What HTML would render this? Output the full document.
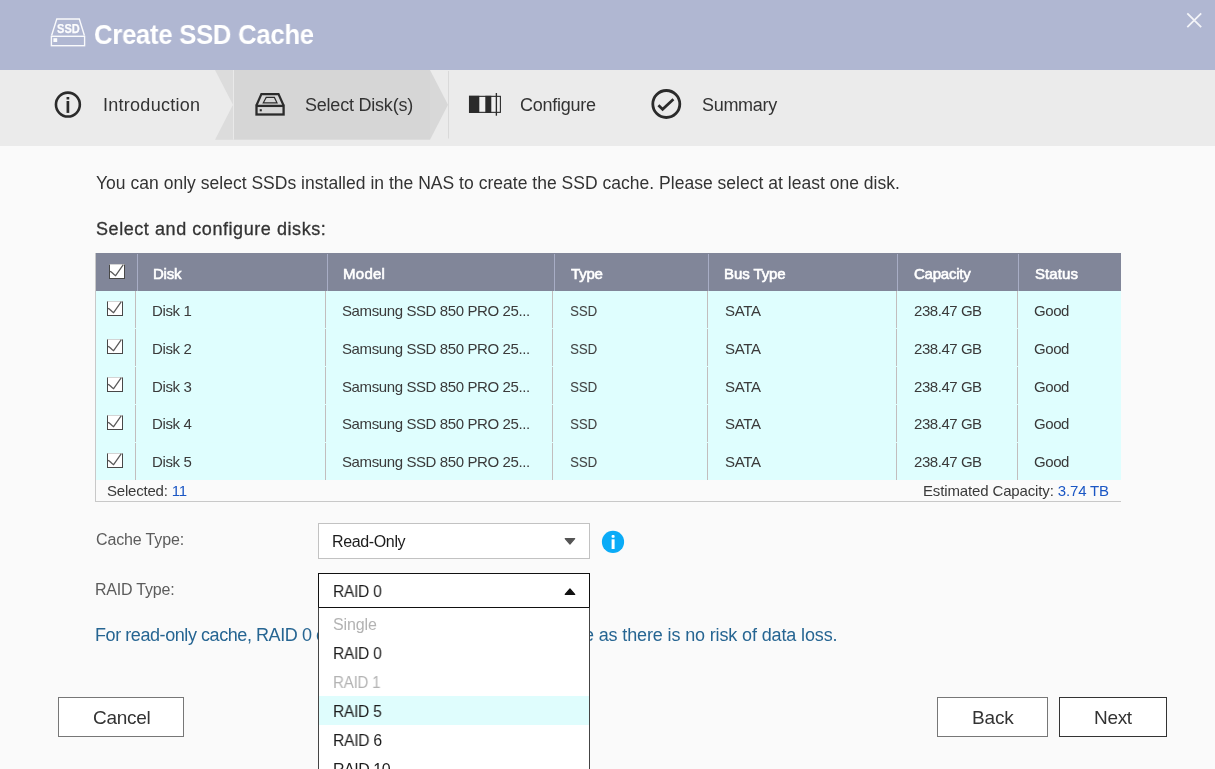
<!DOCTYPE html>
<html lang="en">
<head>
<meta charset="utf-8">
<title>Create SSD Cache</title>
<style>
*{box-sizing:border-box;margin:0;padding:0}
html,body{width:1215px;height:769px;overflow:hidden}
body{position:relative;background:#fafafa;font-family:"Liberation Sans",sans-serif;color:#333;}
.abs{position:absolute}
.t{position:absolute;white-space:nowrap;line-height:1;transform-origin:0 0;will-change:transform}
#hdr{left:0;top:0;width:1215px;height:70px;background:#b0b7d2}
#tabs{left:0;top:70px;width:1215px;height:76px;background:#ebebeb}
.tab{font-size:18px;color:#333;letter-spacing:-0.35px}
/* table */
#thead{left:96px;top:253px;width:1025px;height:38px;background:#818699}
#tbody{left:96px;top:291px;width:1025px;height:189px;background:#dffefe}
#tfoot{left:95px;top:480px;width:1026px;height:22px;border-left:1px solid #c8c8c8;border-bottom:1px solid #c8c8c8;background:#fafafa}
.hs{position:absolute;top:254px;width:1px;height:37px;background:#a8adc5}
.bs{position:absolute;top:291px;width:1px;height:189px;background:#c2bdbd}
.th{font-size:15px;color:#fff;-webkit-text-stroke:0.6px #fff;letter-spacing:-0.3px}
.td{font-size:15px;color:#3a3a3a;letter-spacing:-0.2px}
.cb{position:absolute;width:16px;height:15px;background:#fff;border:1px solid #484848;border-top-color:#d4d4d4;border-left-width:1.3px}
.btn{position:absolute;top:697px;height:40px;background:#fff;border:1px solid #777}
.bt{font-size:19px;color:#333}
.sel{position:absolute;left:318px;width:272px;background:#fff}
.opt{font-size:16px;color:#1c1c1c;left:333px;letter-spacing:-0.3px}
.lbl{font-size:16px;color:#5c5c5c;letter-spacing:-0.2px}
</style>
</head>
<body>
<div id="hdr" class="abs">
<svg class="abs" style="left:40px;top:8px;will-change:transform" width="60" height="50" viewBox="40 8 60 50">
<g fill="none" stroke="#fff" stroke-opacity="0.92" stroke-width="1.4" stroke-linejoin="miter">
<rect x="51.4" y="36.3" width="33.2" height="9.4"/>
<path d="M51.6 35.5 L56.8 19 L79.3 19 L84.4 35.5"/>
</g>
<rect x="53.4" y="38.2" width="3.8" height="3.8" fill="#fff" fill-opacity="0.95"/>
<text x="57.1" y="33" style="font:bold 12.6px 'Liberation Sans',sans-serif" fill="#fff" fill-opacity="0.96" stroke="#fff" stroke-width="0.25" textLength="22.6" lengthAdjust="spacingAndGlyphs">SSD</text>
</svg>
<div id="title" class="t" style="left:93.95px;top:22.44px;letter-spacing:-0.300px;transform:scaleX(0.9522);font-size:27px;font-weight:bold;color:#fff;">Create SSD Cache</div>
<svg class="abs" style="left:1183px;top:9px" width="22" height="22" viewBox="1183 9 22 22"><path d="M1187.3 13.3 L1201.2 27.2 M1201.2 13.3 L1187.3 27.2" stroke="#fff" stroke-opacity="0.85" stroke-width="1.8" fill="none"/></svg>
</div>
<div id="tabs" class="abs">
<!-- active tab shading -->
<svg class="abs" style="left:0;top:0" width="1215" height="76" viewBox="0 70 1215 76">
<path d="M215 70 L233 70 L233 139.7 L215 139.7 L233 104.8 Z" fill="#dcdcdc"/>
<rect x="233" y="70" width="197" height="69.7" fill="#d6d6d6"/>
<path d="M430 70 L448 104.8 L430 139.7 Z" fill="#d8d8d8"/>
<rect x="233" y="70" width="1" height="69.7" fill="#e9e9e9"/>
<rect x="448" y="71" width="1" height="67.5" fill="#d9d9d9"/>
<!-- intro icon -->
<g fill="none" stroke="#2b2b2b">
<circle cx="67.9" cy="104.6" r="11.95" stroke-width="2.6"/>
<path d="M67.9 101 V112.9" stroke-width="2.7"/>
<path d="M67.9 97 V99.5" stroke-width="2.7"/>
</g>
<!-- disk icon -->
<g fill="none" stroke="#2b2b2b" stroke-linejoin="miter">
<rect x="256.5" y="105.9" width="27.1" height="8.6" stroke-width="2.3"/>
<path d="M256.4 105.5 L261.4 94.1 L278.5 94.1 L283.6 105.5" stroke-width="2.2"/>
<path d="M266.2 97.4 L274.4 97.4 L277 102.8 L263.3 102.8 Z" stroke-width="1.2"/>
</g>
<rect x="259.7" y="109.2" width="2.1" height="2.1" fill="#2b2b2b"/>
<!-- configure icon -->
<g>
<rect x="469.5" y="96.35" width="30.9" height="16" fill="#f0f0f0" stroke="#2b2b2b" stroke-width="1.1"/>
<rect x="469" y="95.8" width="10.3" height="17.1" fill="#2b2b2b"/>
<rect x="485.3" y="95.8" width="6" height="17.1" fill="#2b2b2b"/>
<rect x="495.7" y="93" width="1.35" height="22.7" fill="#2b2b2b"/>
</g>
<!-- summary icon -->
<g fill="none" stroke="#2b2b2b">
<circle cx="666.3" cy="104" r="13.5" stroke-width="2.8"/>
<path d="M658.4 105.2 L662.6 109.3 L673.4 99.2" stroke-width="2.7"/>
</g>
</svg>
<div id="tb1" class="t tab" style="left:102.50px;top:25.86px;letter-spacing:0.268px;">Introduction</div>
<div id="tb2" class="t tab" style="left:304.90px;top:25.86px;letter-spacing:-0.217px;">Select Disk(s)</div>
<div id="tb3" class="t tab" style="left:520.00px;top:25.86px;letter-spacing:-0.255px;">Configure</div>
<div id="tb4" class="t tab" style="left:702.00px;top:25.76px;letter-spacing:-0.302px;">Summary</div>
</div>
<div id="thead" class="abs"></div>
<div id="tbody" class="abs"></div>
<div class="hs" style="left:137px"></div>
<div class="hs" style="left:327px"></div>
<div class="hs" style="left:554px"></div>
<div class="hs" style="left:708px"></div>
<div class="hs" style="left:897px"></div>
<div class="hs" style="left:1018px"></div>
<div class="bs" style="left:135px"></div>
<div class="bs" style="left:325px"></div>
<div class="bs" style="left:552px"></div>
<div class="bs" style="left:707px"></div>
<div class="bs" style="left:896px"></div>
<div class="bs" style="left:1017px"></div>
<div class="abs" style="left:96px;top:328px;width:1025px;height:1px;background:#dffefd;"></div>
<div class="abs" style="left:96px;top:366px;width:1025px;height:1px;background:#dffefd;"></div>
<div class="abs" style="left:96px;top:404px;width:1025px;height:1px;background:#dffefd;"></div>
<div class="abs" style="left:96px;top:442px;width:1025px;height:1px;background:#dffefd;"></div>
<div id="h0" class="t th" style="left:153.30px;top:266.30px;letter-spacing:-0.255px;">Disk</div>
<div id="h1" class="t th" style="left:343.30px;top:266.30px;letter-spacing:0.270px;">Model</div>
<div id="h2" class="t th" style="left:570.90px;top:266.30px;letter-spacing:-0.192px;">Type</div>
<div id="h3" class="t th" style="left:723.90px;top:266.30px;letter-spacing:-0.085px;">Bus Type</div>
<div id="h4" class="t th" style="left:914.00px;top:266.30px;letter-spacing:-0.223px;">Capacity</div>
<div id="h5" class="t th" style="left:1035.30px;top:266.30px;letter-spacing:0.095px;">Status</div>
<div id="c0_0" class="t td" style="left:152.10px;top:303.00px;letter-spacing:-0.367px;">Disk 1</div>
<div id="c0_1" class="t td" style="left:342.40px;top:303.00px;letter-spacing:-0.393px;">Samsung SSD 850 PRO 25...</div>
<div id="c0_2" class="t td" style="left:570.20px;top:303.00px;letter-spacing:-0.300px;transform:scaleX(0.8977);">SSD</div>
<div id="c0_3" class="t td" style="left:724.60px;top:303.00px;letter-spacing:-0.349px;">SATA</div>
<div id="c0_4" class="t td" style="left:913.70px;top:303.00px;letter-spacing:-0.452px;">238.47 GB</div>
<div id="c0_5" class="t td" style="left:1034.30px;top:303.00px;letter-spacing:-0.417px;">Good</div>
<div class="cb" style="left:107px;top:301px"><svg width="16" height="15" viewBox="0 0 16 15" style="position:absolute;left:-1px;top:-1px"><path d="M0.9 7.3 C2.8 7.4 4 10.2 6.6 11.6 L14.3 0.7" fill="none" stroke="#5a5a5a" stroke-width="1.25"/></svg></div>
<div id="c1_0" class="t td" style="left:152.10px;top:340.80px;letter-spacing:-0.367px;">Disk 2</div>
<div id="c1_1" class="t td" style="left:342.40px;top:340.80px;letter-spacing:-0.393px;">Samsung SSD 850 PRO 25...</div>
<div id="c1_2" class="t td" style="left:570.20px;top:340.80px;letter-spacing:-0.300px;transform:scaleX(0.8977);">SSD</div>
<div id="c1_3" class="t td" style="left:724.60px;top:340.80px;letter-spacing:-0.349px;">SATA</div>
<div id="c1_4" class="t td" style="left:913.70px;top:340.80px;letter-spacing:-0.452px;">238.47 GB</div>
<div id="c1_5" class="t td" style="left:1034.30px;top:340.80px;letter-spacing:-0.417px;">Good</div>
<div class="cb" style="left:107px;top:339px"><svg width="16" height="15" viewBox="0 0 16 15" style="position:absolute;left:-1px;top:-1px"><path d="M0.9 7.3 C2.8 7.4 4 10.2 6.6 11.6 L14.3 0.7" fill="none" stroke="#5a5a5a" stroke-width="1.25"/></svg></div>
<div id="c2_0" class="t td" style="left:152.10px;top:378.60px;letter-spacing:-0.367px;">Disk 3</div>
<div id="c2_1" class="t td" style="left:342.40px;top:378.60px;letter-spacing:-0.393px;">Samsung SSD 850 PRO 25...</div>
<div id="c2_2" class="t td" style="left:570.20px;top:378.60px;letter-spacing:-0.300px;transform:scaleX(0.8977);">SSD</div>
<div id="c2_3" class="t td" style="left:724.60px;top:378.60px;letter-spacing:-0.349px;">SATA</div>
<div id="c2_4" class="t td" style="left:913.70px;top:378.60px;letter-spacing:-0.452px;">238.47 GB</div>
<div id="c2_5" class="t td" style="left:1034.30px;top:378.60px;letter-spacing:-0.417px;">Good</div>
<div class="cb" style="left:107px;top:377px"><svg width="16" height="15" viewBox="0 0 16 15" style="position:absolute;left:-1px;top:-1px"><path d="M0.9 7.3 C2.8 7.4 4 10.2 6.6 11.6 L14.3 0.7" fill="none" stroke="#5a5a5a" stroke-width="1.25"/></svg></div>
<div id="c3_0" class="t td" style="left:152.10px;top:416.40px;letter-spacing:-0.367px;">Disk 4</div>
<div id="c3_1" class="t td" style="left:342.40px;top:416.40px;letter-spacing:-0.393px;">Samsung SSD 850 PRO 25...</div>
<div id="c3_2" class="t td" style="left:570.20px;top:416.40px;letter-spacing:-0.300px;transform:scaleX(0.8977);">SSD</div>
<div id="c3_3" class="t td" style="left:724.60px;top:416.40px;letter-spacing:-0.349px;">SATA</div>
<div id="c3_4" class="t td" style="left:913.70px;top:416.40px;letter-spacing:-0.452px;">238.47 GB</div>
<div id="c3_5" class="t td" style="left:1034.30px;top:416.40px;letter-spacing:-0.417px;">Good</div>
<div class="cb" style="left:107px;top:415px"><svg width="16" height="15" viewBox="0 0 16 15" style="position:absolute;left:-1px;top:-1px"><path d="M0.9 7.3 C2.8 7.4 4 10.2 6.6 11.6 L14.3 0.7" fill="none" stroke="#5a5a5a" stroke-width="1.25"/></svg></div>
<div id="c4_0" class="t td" style="left:152.10px;top:454.20px;letter-spacing:-0.367px;">Disk 5</div>
<div id="c4_1" class="t td" style="left:342.40px;top:454.20px;letter-spacing:-0.393px;">Samsung SSD 850 PRO 25...</div>
<div id="c4_2" class="t td" style="left:570.20px;top:454.20px;letter-spacing:-0.300px;transform:scaleX(0.8977);">SSD</div>
<div id="c4_3" class="t td" style="left:724.60px;top:454.20px;letter-spacing:-0.349px;">SATA</div>
<div id="c4_4" class="t td" style="left:913.70px;top:454.20px;letter-spacing:-0.452px;">238.47 GB</div>
<div id="c4_5" class="t td" style="left:1034.30px;top:454.20px;letter-spacing:-0.417px;">Good</div>
<div class="cb" style="left:107px;top:453px"><svg width="16" height="15" viewBox="0 0 16 15" style="position:absolute;left:-1px;top:-1px"><path d="M0.9 7.3 C2.8 7.4 4 10.2 6.6 11.6 L14.3 0.7" fill="none" stroke="#5a5a5a" stroke-width="1.25"/></svg></div>
<div class="cb" style="left:109px;top:264px"><svg width="16" height="15" viewBox="0 0 16 15" style="position:absolute;left:-1px;top:-1px"><path d="M0.9 7.3 C2.8 7.4 4 10.2 6.6 11.6 L14.3 0.7" fill="none" stroke="#5a5a5a" stroke-width="1.25"/></svg></div>
<div class="abs" style="left:95px;top:253px;width:1px;height:227px;background:#c8c8c8"></div>
<div id="tfoot" class="abs"></div>
<div id="f1" class="t td" style="left:107.30px;top:483.30px;letter-spacing:-0.203px;">Selected: <span style="color:#1a56c4">11</span></div>
<div id="f2" class="t td" style="left:923.00px;top:483.30px;letter-spacing:-0.142px;">Estimated Capacity: <span style="color:#1a56c4">3.74 TB</span></div>
<div id="p1" class="t" style="left:95.50px;top:174.89px;letter-spacing:0.020px;font-size:17.5px;color:#333">You can only select SSDs installed in the NAS to create the SSD cache. Please select at least one disk.</div>
<div id="p2" class="t" style="left:95.75px;top:219.76px;letter-spacing:0.565px;font-size:18px;color:#333;-webkit-text-stroke:0.3px #333">Select and configure disks:</div>
<div id="l1" class="t lbl" style="left:95.50px;top:532.46px;letter-spacing:-0.138px;">Cache Type:</div>
<div id="l2" class="t lbl" style="left:94.90px;top:582.46px;letter-spacing:-0.207px;">RAID Type:</div>
<div class="abs" style="left:90px;top:618px;width:229px;height:34px;overflow:hidden"><div id="b1" class="t" style="left:4.70px;top:7.76px;letter-spacing:-0.430px;font-size:18px;color:#266592">For read-only cache, RAID 0 can provide the best performanc</div></div>
<div id="b2" class="t" style="left:584.40px;top:625.76px;letter-spacing:-0.136px;font-size:18px;color:#266592">e as there is no risk of data loss.</div>
<div class="sel" style="top:523px;height:36px;border:1px solid #c2c2c2"></div>
<div id="s1" class="t opt" style="left:332.20px;top:533.66px;letter-spacing:-0.360px;">Read-Only</div>
<svg class="abs" style="left:560px;top:534px" width="20" height="14" viewBox="560 534 20 14"><path d="M565.2 538.6 L574.7 538.6 L569.95 544 Z" fill="#555" stroke="#555" stroke-width="1.2" stroke-linejoin="round"/></svg>
<svg class="abs" style="left:600px;top:529px" width="26" height="26" viewBox="600 529 26 26"><circle cx="613" cy="541.9" r="11.1" fill="#0aabf7"/><rect x="611.6" y="539.3" width="3" height="9.7" fill="#fff"/><rect x="611.6" y="535.1" width="3" height="2.6" rx="0.8" fill="#fff"/></svg>
<div class="sel" style="top:573px;height:35px;border:1px solid #111"></div>
<div id="s2" class="t opt" style="left:332.83px;top:584.06px;letter-spacing:-0.300px;transform:scaleX(0.9721);">RAID 0</div>
<svg class="abs" style="left:560px;top:584px" width="20" height="14" viewBox="560 584 20 14"><path d="M565.2 594.4 L574.7 594.4 L569.95 589 Z" fill="#111" stroke="#111" stroke-width="1.2" stroke-linejoin="round"/></svg>
<div class="sel" style="top:607px;height:170px;border-left:1px solid #444;border-right:1px solid #444;border-top:1px solid #111"></div>
<div class="abs" style="left:319px;top:696px;width:270px;height:29px;background:#dffdfd"></div>
<div id="o0" class="t opt" style="left:333.00px;top:616.56px;letter-spacing:-0.116px;color:#b3b3b3">Single</div>
<div id="o1" class="t opt" style="left:332.83px;top:645.56px;letter-spacing:-0.300px;transform:scaleX(0.9721);color:#1c1c1c">RAID 0</div>
<div id="o2" class="t opt" style="left:332.85px;top:674.56px;letter-spacing:-0.300px;transform:scaleX(0.9477);color:#b3b3b3">RAID 1</div>
<div id="o3" class="t opt" style="left:332.83px;top:703.56px;letter-spacing:-0.300px;transform:scaleX(0.9721);color:#1c1c1c">RAID 5</div>
<div id="o4" class="t opt" style="left:332.82px;top:732.56px;letter-spacing:-0.300px;transform:scaleX(0.9782);color:#1c1c1c">RAID 6</div>
<div id="o5" class="t opt" style="left:332.80px;top:761.56px;letter-spacing:-0.462px;color:#1c1c1c">RAID 10</div>
<div class="btn" style="left:58px;width:126px"></div>
<div class="btn" style="left:937px;width:111px"></div>
<div class="btn" style="left:1059px;width:108px;border-color:#333"></div>
<div id="bt1" class="t bt" style="left:93.00px;top:707.92px;letter-spacing:-0.304px;">Cancel</div>
<div id="bt2" class="t bt" style="left:971.50px;top:707.92px;letter-spacing:-0.147px;">Back</div>
<div id="bt3" class="t bt" style="left:1093.50px;top:707.92px;letter-spacing:-0.329px;">Next</div>
</body>
</html>
